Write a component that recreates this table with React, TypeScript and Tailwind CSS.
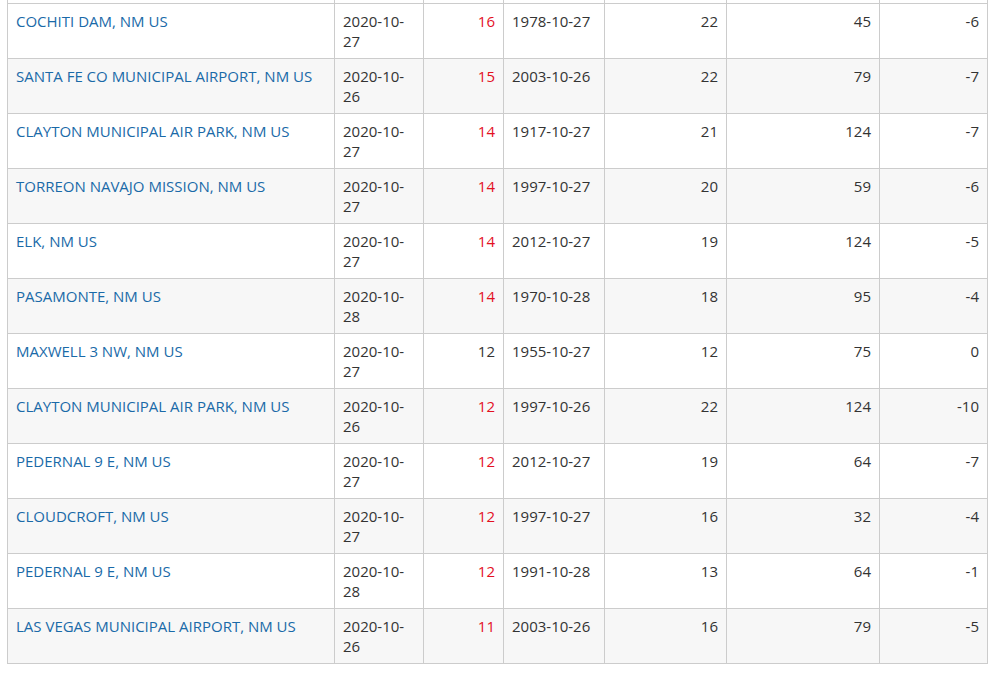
type Row = {
  station: string;
  date: string;
  value: number;
  hot?: boolean;
  recordDate: string;
  record: number;
  years: number;
  diff: number;
};

const rows: Row[] = [
  { station: 'COCHITI DAM, NM US', date: '2020-10-27', value: 16, hot: true, recordDate: '1978-10-27', record: 22, years: 45, diff: -6 },
  { station: 'SANTA FE CO MUNICIPAL AIRPORT, NM US', date: '2020-10-26', value: 15, hot: true, recordDate: '2003-10-26', record: 22, years: 79, diff: -7 },
  { station: 'CLAYTON MUNICIPAL AIR PARK, NM US', date: '2020-10-27', value: 14, hot: true, recordDate: '1917-10-27', record: 21, years: 124, diff: -7 },
  { station: 'TORREON NAVAJO MISSION, NM US', date: '2020-10-27', value: 14, hot: true, recordDate: '1997-10-27', record: 20, years: 59, diff: -6 },
  { station: 'ELK, NM US', date: '2020-10-27', value: 14, hot: true, recordDate: '2012-10-27', record: 19, years: 124, diff: -5 },
  { station: 'PASAMONTE, NM US', date: '2020-10-28', value: 14, hot: true, recordDate: '1970-10-28', record: 18, years: 95, diff: -4 },
  { station: 'MAXWELL 3 NW, NM US', date: '2020-10-27', value: 12, recordDate: '1955-10-27', record: 12, years: 75, diff: 0 },
  { station: 'CLAYTON MUNICIPAL AIR PARK, NM US', date: '2020-10-26', value: 12, hot: true, recordDate: '1997-10-26', record: 22, years: 124, diff: -10 },
  { station: 'PEDERNAL 9 E, NM US', date: '2020-10-27', value: 12, hot: true, recordDate: '2012-10-27', record: 19, years: 64, diff: -7 },
  { station: 'CLOUDCROFT, NM US', date: '2020-10-27', value: 12, hot: true, recordDate: '1997-10-27', record: 16, years: 32, diff: -4 },
  { station: 'PEDERNAL 9 E, NM US', date: '2020-10-28', value: 12, hot: true, recordDate: '1991-10-28', record: 13, years: 64, diff: -1 },
  { station: 'LAS VEGAS MUNICIPAL AIRPORT, NM US', date: '2020-10-26', value: 11, hot: true, recordDate: '2003-10-26', record: 16, years: 79, diff: -5 },
];

const cell = 'border border-[#cccccc] px-2 pt-[7px] pb-[7px] align-top';

function splitDate(d: string) {
  // the narrow column wraps after the month: "2020-10-" / "27"
  return [d.slice(0, 8), d.slice(8)];
}

export default function App() {
  return (
    <div className="h-[673px] w-[996px] overflow-hidden bg-white font-['Open_Sans',sans-serif] text-[15px] leading-[20px] text-[#333333]">
      <div className="ml-[7px] mt-[-52px]">
        <table className="w-[980px] table-fixed border-collapse">
          <colgroup>
            <col className="w-[327px]" />
            <col className="w-[89px]" />
            <col className="w-[80px]" />
            <col className="w-[101px]" />
            <col className="w-[122px]" />
            <col className="w-[153px]" />
            <col className="w-[108px]" />
          </colgroup>
          <tbody>
            <tr className="bg-white" aria-hidden="true">
              {Array.from({ length: 7 }).map((_, i) => (
                <td key={i} className={cell}>
                  <div className="h-[40px]" />
                </td>
              ))}
            </tr>
            {rows.map((r, i) => {
              const [d1, d2] = splitDate(r.date);
              return (
                <tr key={i} className={i % 2 === 1 ? 'bg-[#f7f7f7]' : 'bg-white'}>
                  <td className={cell}>
                    <a href="#" className="text-[#1a6aa8] no-underline">{r.station}</a>
                  </td>
                  <td className={cell}>
                    {d1}
                    <br />
                    {d2}
                  </td>
                  <td className={`${cell} text-right ${r.hot ? 'text-[#e3101f]' : ''}`}>{r.value}</td>
                  <td className={cell}>{r.recordDate}</td>
                  <td className={`${cell} text-right`}>{r.record}</td>
                  <td className={`${cell} text-right`}>{r.years}</td>
                  <td className={`${cell} text-right`}>{r.diff}</td>
                </tr>
              );
            })}
          </tbody>
        </table>
      </div>
    </div>
  );
}
